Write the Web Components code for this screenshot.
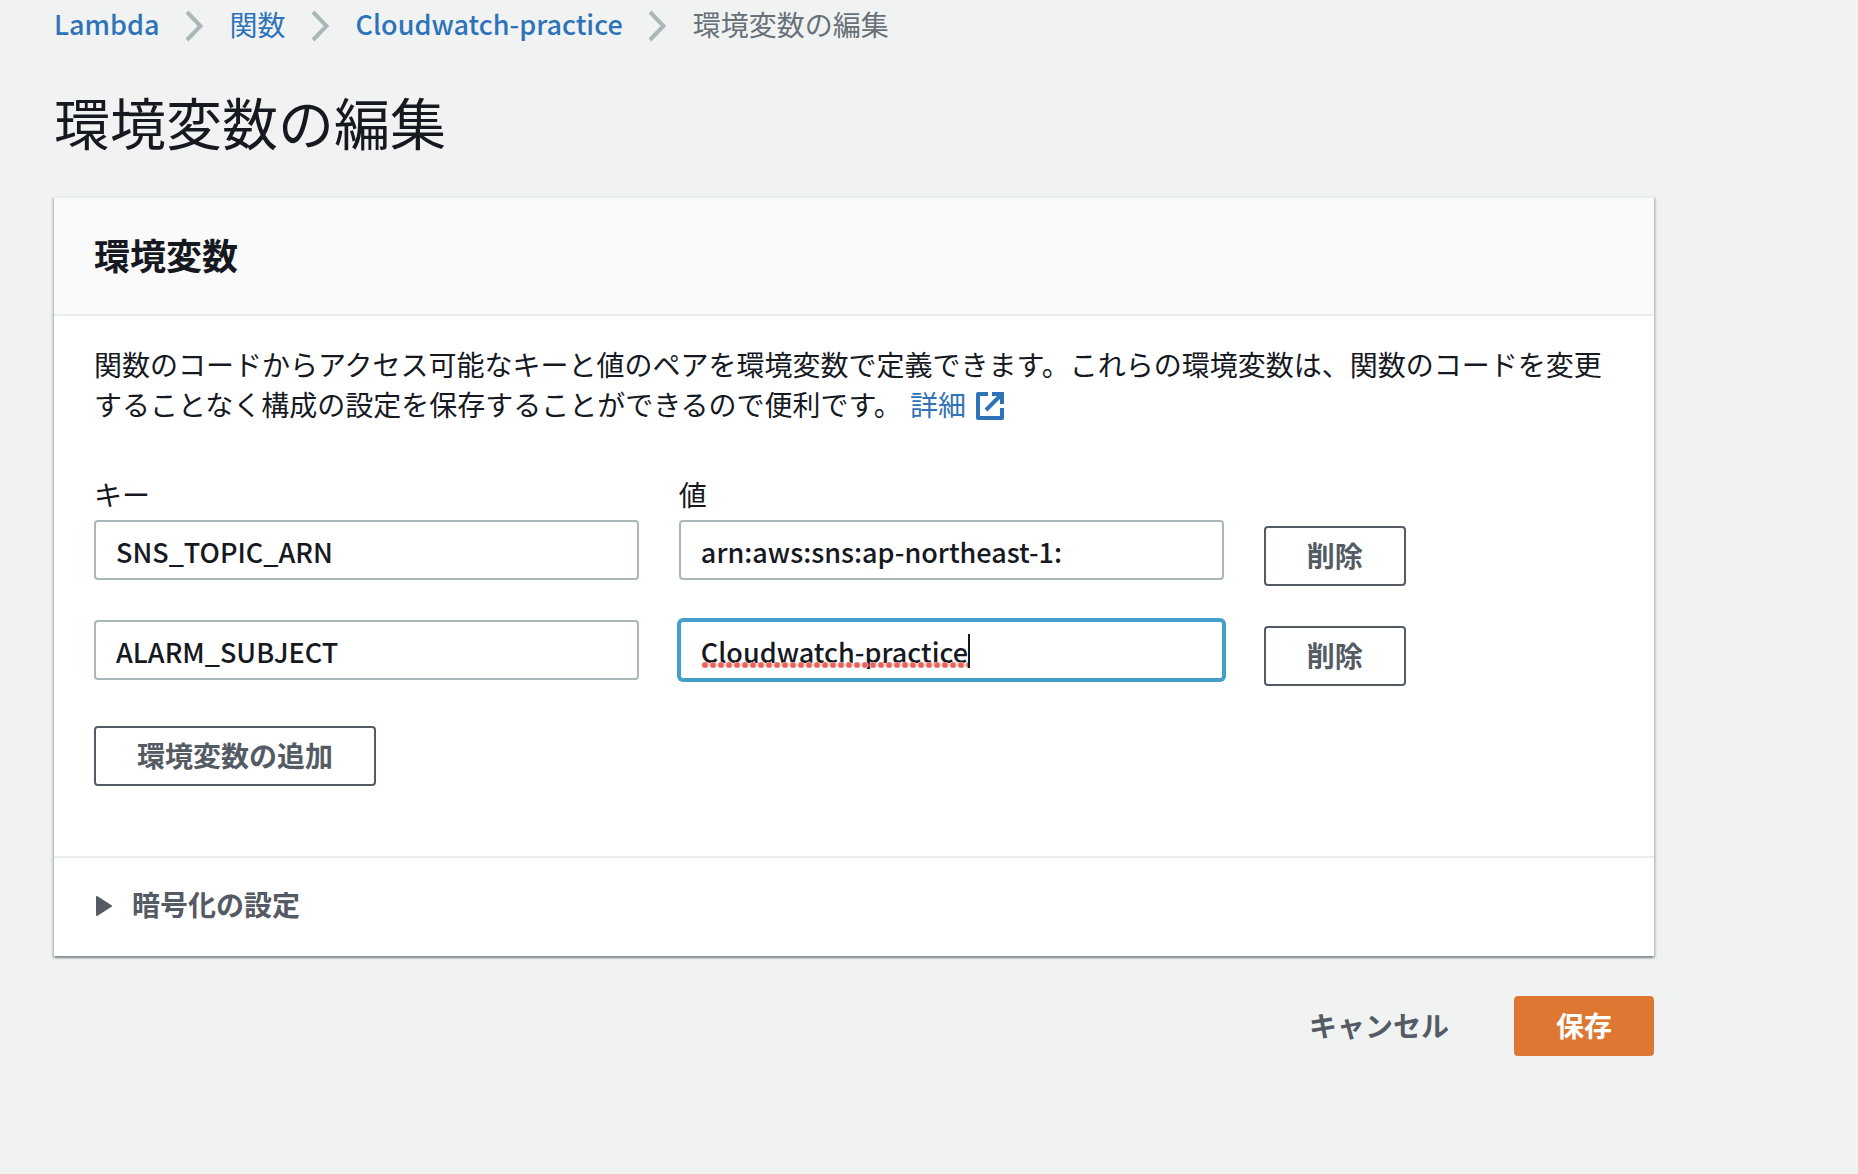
<!DOCTYPE html>
<html lang="ja">
<head>
<meta charset="utf-8">
<meta name="viewport" content="width=device-width, initial-scale=1">
<title>環境変数の編集</title>
<style>
  :root {
    --text: #16191f;
    --muted: #545b64;
    --link: #2e73b8;
    --line: #eaeded;
    --control: #aab7b8;
    --focus: #44a0c8;
    --primary: #dd7732;
    --latin-size: 27px;
  }
  body {
    margin: 0;
    background: #f1f3f3;
    color: var(--text);
    font: 28px/40px "Noto Sans CJK JP", "Noto Sans", sans-serif;
  }
</style>
</head>
<body>
<lambda-page>
  <bread-crumbs slot="nav">
    <crumb-item href="#lambda" lang="en">Lambda</crumb-item>
    <crumb-item href="#functions">関数</crumb-item>
    <crumb-item href="#function" lang="en">Cloudwatch-practice</crumb-item>
    <crumb-item>環境変数の編集</crumb-item>
  </bread-crumbs>
  <span slot="title">環境変数の編集</span>

  <form-card>
    <span slot="header">環境変数</span>
    <card-description>関数のコードからアクセス可能なキーと値のペアを環境変数で定義できます。これらの環境変数は、関数のコードを変更することなく構成の設定を保存することができるので便利です。 <external-link href="#details">詳細</external-link></card-description>
    <env-list>
      <env-row>
        <env-field label="キー" value="SNS_TOPIC_ARN"></env-field>
        <env-field label="値" value="arn:aws:sns:ap-northeast-1:"></env-field>
        <aws-button slot="action">削除</aws-button>
      </env-row>
      <env-row>
        <env-field name="キー" value="ALARM_SUBJECT"></env-field>
        <env-field name="値" value="Cloudwatch-practice" active></env-field>
        <aws-button slot="action">削除</aws-button>
      </env-row>
      <aws-button slot="add">環境変数の追加</aws-button>
    </env-list>
    <expand-section slot="footer">暗号化の設定</expand-section>
  </form-card>

  <aws-button slot="actions" variant="link">キャンセル</aws-button>
  <aws-button slot="actions" variant="primary">保存</aws-button>
</lambda-page>

<script>
  // small helper: every element renders its template into an open root
  class BaseElement extends HTMLElement {
    constructor() {
      super();
      this.attachShadow({ mode: 'open' });
    }
    connectedCallback() {
      this.shadowRoot.innerHTML = this.template();
      this.ready();
    }
    ready() {}
  }

  class LambdaPage extends BaseElement {
    template() {
      return `
        <style>
          :host { display: block; padding: 4px 54px 40px; }
          main { max-width: 1600px; }
          h1 { margin: 42px 0 40px; font-size: 56px; line-height: 70px; font-weight: 400; }
          footer { display: flex; justify-content: flex-end; gap: 22px; margin-top: 40px; }
        </style>
        <slot name="nav"></slot>
        <main>
          <h1><slot name="title"></slot></h1>
          <slot></slot>
          <footer><slot name="actions"></slot></footer>
        </main>
      `;
    }
  }

  class BreadCrumbs extends BaseElement {
    template() {
      return `
        <style>
          :host { display: block; }
          nav { display: flex; flex-wrap: wrap; }
        </style>
        <nav aria-label="breadcrumb"><slot></slot></nav>
      `;
    }
  }

  class CrumbItem extends BaseElement {
    template() {
      const href = this.getAttribute('href');
      const style = `
        <style>
          :host { display: flex; align-items: center; }
          a { color: var(--link); text-decoration: none; }
          :host([lang="en"]) a { font-size: var(--latin-size); font-weight: 500; }
          span { color: #687078; }
          svg { width: 18px; height: 32px; margin: 4px 27px 0 25px; }
        </style>
      `;
      if (!href) {
        return `${style}<span aria-current="page"><slot></slot></span>`;
      }
      return `
        ${style}
        <a href="${href}"><slot></slot></a>
        <svg viewBox="0 0 18 32" aria-hidden="true">
          <path d="M2 2 15.500 16 2 30" fill="none" stroke="#aab7b8" stroke-width="4"/>
        </svg>
      `;
    }
  }

  class FormCard extends BaseElement {
    template() {
      return `
        <style>
          :host {
            display: block;
            background: #fff;
            border-top: 2px solid var(--line);
            box-shadow: 0 2px 2px rgba(0, 28, 36, .3), 2px 2px 2px rgba(0, 28, 36, .15), -2px 2px 2px rgba(0, 28, 36, .15);
          }
          header { padding: 34px 40px 38px; background: #fafafa; border-bottom: 2px solid var(--line); }
          h2 { margin: 0; font-size: 36px; line-height: 44px; font-weight: 700; }
          .content { padding: 28px 40px 70px; }
          .footer { padding: 26px 40px 32px; border-top: 2px solid var(--line); }
        </style>
        <header><h2><slot name="header"></slot></h2></header>
        <div class="content"><slot></slot></div>
        <div class="footer"><slot name="footer"></slot></div>
      `;
    }
  }

  class CardDescription extends BaseElement {
    template() {
      return `
        <style>
          :host { display: block; margin-bottom: 50px; }
          p { margin: 0; }
        </style>
        <p><slot></slot></p>
      `;
    }
  }

  class ExternalLink extends BaseElement {
    template() {
      return `
        <style>
          :host { display: inline; }
          a { margin-left: 2px; color: var(--link); text-decoration: none; white-space: nowrap; }
          svg { width: 28px; height: 28px; margin-left: 10px; vertical-align: -4px; }
        </style>
        <a href="${this.getAttribute('href')}"><slot></slot><svg viewBox="0 0 28 28" fill="none" stroke="currentColor" stroke-width="4" aria-hidden="true">
          <path d="M12 2H2V26H26V16M16 2H26V12M25 3 10 18" stroke-linejoin="round"/>
          <path d="M24 0H28V4H24Z" fill="currentColor" stroke="none"/>
        </svg></a>
      `;
    }
  }

  class EnvList extends BaseElement {
    template() {
      return `
        <style>
          :host { display: block; }
          .rows { display: grid; gap: 34px; margin-bottom: 40px; }
        </style>
        <div class="rows"><slot></slot></div>
        <slot name="add"></slot>
      `;
    }
  }

  class EnvRow extends BaseElement {
    template() {
      return `
        <style>
          :host { display: grid; grid-template-columns: 14fr 14fr 9fr; column-gap: 40px; }
          .action { align-self: end; }
        </style>
        <slot></slot>
        <div class="action"><slot name="action"></slot></div>
      `;
    }
  }

  class EnvField extends BaseElement {
    template() {
      const label = this.getAttribute('label');
      const name = this.getAttribute('name');
      return `
        <style>
          :host { display: block; padding-bottom: 6px; }
          label { display: block; margin-bottom: 6px; }
          .box { position: relative; }
          input {
            display: block;
            box-sizing: border-box;
            width: 100%;
            height: 60px;
            padding: 2px 20px 0;
            border: 2px solid var(--control);
            border-radius: 4px;
            background: #fff;
            color: inherit;
            font: inherit;
            font-size: var(--latin-size);
            font-weight: 500;
            outline: none;
          }
          :host([active]) input {
            border-color: var(--focus);
            box-shadow: 0 0 0 2px var(--focus);
            caret-color: transparent;
          }
          /* spelling marks and the text cursor, as wide as the value */
          .marks {
            position: absolute;
            top: 14px;
            left: 22px;
            height: 34px;
            border-right: 2px solid var(--text);
            background: radial-gradient(circle, #ea6058 2px, #f4a5a0 3px, transparent 4px) 0 100% / 8px 6px repeat-x;
            pointer-events: none;
          }
        </style>
        ${label ? `<label for="input">${label}</label>` : ''}
        <div class="box">
          <input id="input" type="text" spellcheck="false" value="${this.getAttribute('value')}" ${name ? `aria-label="${name}"` : ''}>
          ${this.hasAttribute('active') ? '<div class="marks"></div>' : ''}
        </div>
      `;
    }
    ready() {
      const marks = this.shadowRoot.querySelector('.marks');
      if (!marks) return;
      const input = this.shadowRoot.querySelector('input');
      const update = () => {
        const ctx = document.createElement('canvas').getContext('2d');
        ctx.font = getComputedStyle(input).font;
        marks.style.width = Math.round(ctx.measureText(input.value).width) + 'px';
      };
      input.addEventListener('input', update);
      update();
    }
  }

  class AwsButton extends BaseElement {
    template() {
      return `
        <style>
          :host { display: inline-block; vertical-align: top; }
          button {
            display: block;
            height: 60px;
            padding: 0 41px 2px;
            border: 2px solid var(--muted);
            border-radius: 4px;
            background: #fff;
            color: var(--muted);
            font: inherit;
            font-weight: 700;
            cursor: pointer;
          }
          :host([variant="link"]) button { border-color: transparent; background: transparent; }
          :host([variant="primary"]) button { padding: 0 40px 2px; border-color: var(--primary); background: var(--primary); color: #fff; }
        </style>
        <button type="button"><slot></slot></button>
      `;
    }
  }

  class ExpandSection extends BaseElement {
    template() {
      return `
        <style>
          :host { display: block; }
          button {
            display: flex;
            align-items: center;
            gap: 20px;
            padding: 0 2px;
            border: 0;
            background: none;
            color: var(--muted);
            font: inherit;
            font-weight: 700;
            cursor: pointer;
          }
          svg { width: 16px; height: 20px; margin-top: 4px; }
        </style>
        <button type="button" aria-expanded="false">
          <svg viewBox="0 0 16 20" aria-hidden="true">
            <path d="M1 1 15 10 1 19Z" fill="currentColor" stroke="currentColor" stroke-width="2" stroke-linejoin="round"/>
          </svg>
          <slot></slot>
        </button>
      `;
    }
  }

  customElements.define('lambda-page', LambdaPage);
  customElements.define('bread-crumbs', BreadCrumbs);
  customElements.define('crumb-item', CrumbItem);
  customElements.define('form-card', FormCard);
  customElements.define('card-description', CardDescription);
  customElements.define('external-link', ExternalLink);
  customElements.define('env-list', EnvList);
  customElements.define('env-row', EnvRow);
  customElements.define('env-field', EnvField);
  customElements.define('aws-button', AwsButton);
  customElements.define('expand-section', ExpandSection);
</script>
</body>
</html>
